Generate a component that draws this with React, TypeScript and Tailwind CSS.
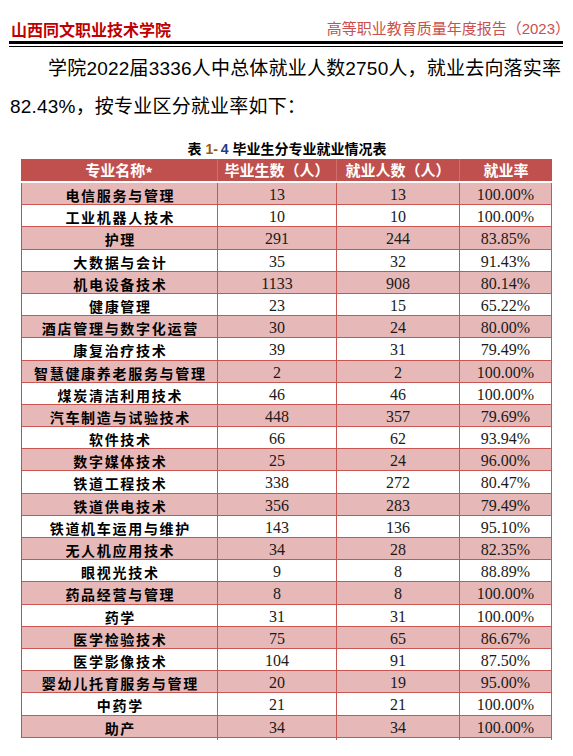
import React from "react";

type Row = [string, string, string, string];

const rows: Row[] = [
  ["电信服务与管理", "13", "13", "100.00%"],
  ["工业机器人技术", "10", "10", "100.00%"],
  ["护理", "291", "244", "83.85%"],
  ["大数据与会计", "35", "32", "91.43%"],
  ["机电设备技术", "1133", "908", "80.14%"],
  ["健康管理", "23", "15", "65.22%"],
  ["酒店管理与数字化运营", "30", "24", "80.00%"],
  ["康复治疗技术", "39", "31", "79.49%"],
  ["智慧健康养老服务与管理", "2", "2", "100.00%"],
  ["煤炭清洁利用技术", "46", "46", "100.00%"],
  ["汽车制造与试验技术", "448", "357", "79.69%"],
  ["软件技术", "66", "62", "93.94%"],
  ["数字媒体技术", "25", "24", "96.00%"],
  ["铁道工程技术", "338", "272", "80.47%"],
  ["铁道供电技术", "356", "283", "79.49%"],
  ["铁道机车运用与维护", "143", "136", "95.10%"],
  ["无人机应用技术", "34", "28", "82.35%"],
  ["眼视光技术", "9", "8", "88.89%"],
  ["药品经营与管理", "8", "8", "100.00%"],
  ["药学", "31", "31", "100.00%"],
  ["医学检验技术", "75", "65", "86.67%"],
  ["医学影像技术", "104", "91", "87.50%"],
  ["婴幼儿托育服务与管理", "20", "19", "95.00%"],
  ["中药学", "21", "21", "100.00%"],
  ["助产", "34", "34", "100.00%"],
];

const cjk = { fontFamily: '"Noto Sans CJK SC", sans-serif' };
const mixed = { fontFamily: '"Liberation Sans", "Noto Sans CJK SC", sans-serif' };
const serif = { fontFamily: '"Liberation Serif", "Noto Sans CJK SC", serif' };

export default function App() {
  return (
    <div className="w-[573px] h-[756px] bg-white overflow-hidden">
      {/* page header */}
      <div className="h-[41px] pt-[19px] pl-[11px] pr-[3px] flex justify-between leading-[20px]">
        <span className="text-[16px] font-bold text-[#c00000]" style={cjk}>
          山西同文职业技术学院
        </span>
        <span className="text-[15px] text-[#c9504c]" style={mixed}>
          高等职业教育质量年度报告（2023）
        </span>
      </div>
      <div className="ml-[9px] w-[554px]">
        <div className="h-[3px] bg-black" />
        <div className="h-[2px]" />
        <div className="h-[1px] bg-black" />
      </div>

      {/* paragraph */}
      <div className="mt-[3px] text-[19px] leading-[38px] tracking-[0.2px] text-black" style={mixed}>
        <div className="pl-[48px] whitespace-nowrap">学院2022届3336人中总体就业人数2750人，就业去向落实率</div>
        <div className="pl-[10px] whitespace-nowrap">82.43%，按专业区分就业率如下：</div>
      </div>

      {/* caption */}
      <div className="mt-[13px] h-[20px] leading-[20px] text-center text-[14px] font-bold text-black pl-[1px]" style={mixed}>
        表 <span className="text-[#9a5a10]">1-</span>
        <span className="ml-[3px] text-[#1f3b8c]">4</span> 毕业生分专业就业情况表
      </div>

      {/* table */}
      <div className="ml-[21px] w-[531px]">
        <div
          className="grid grid-cols-[197px_119px_123px_92px] h-[24px] bg-[#c0504d] border-b-2 border-white text-white font-bold text-[15px] leading-[22px]"
          style={cjk}
        >
          <div className="text-center border-r border-[#d06e6b]">
            专业名称<span className="relative top-[3px]">*</span>
          </div>
          <div className="text-center border-r border-[#d06e6b]">毕业生数（人）</div>
          <div className="text-center border-r border-[#d06e6b]">就业人数（人）</div>
          <div className="text-center">就业率</div>
        </div>
        <div className="border-l border-[#c0504d]">
          {rows.map((r, i) => (
            <div
              key={r[0]}
              className={
                "grid grid-cols-[196px_119px_123px_92px] h-[22.2px] border-b border-[#c85753] items-center " +
                (i % 2 === 0 ? "bg-[#e6b8b7]" : "bg-white")
              }
            >
              <div className="h-full flex items-center justify-center border-r border-[#c85753]">
                <span
                  className="text-[14px] font-bold tracking-[1.7px] pl-[1.7px] leading-[20px] text-black"
                  style={cjk}
                >
                  {r[0]}
                </span>
              </div>
              <div
                className="h-full flex items-center justify-center border-r border-[#c85753] text-[16px] text-[#1a1a1a]"
                style={serif}
              >
                {r[1]}
              </div>
              <div
                className="h-full flex items-center justify-center border-r border-[#c85753] text-[16px] text-[#1a1a1a]"
                style={serif}
              >
                {r[2]}
              </div>
              <div
                className="h-full flex items-center justify-center border-r border-[#c85753] text-[16px] text-[#1a1a1a]"
                style={serif}
              >
                {r[3]}
              </div>
            </div>
          ))}
        </div>
      </div>
    </div>
  );
}
